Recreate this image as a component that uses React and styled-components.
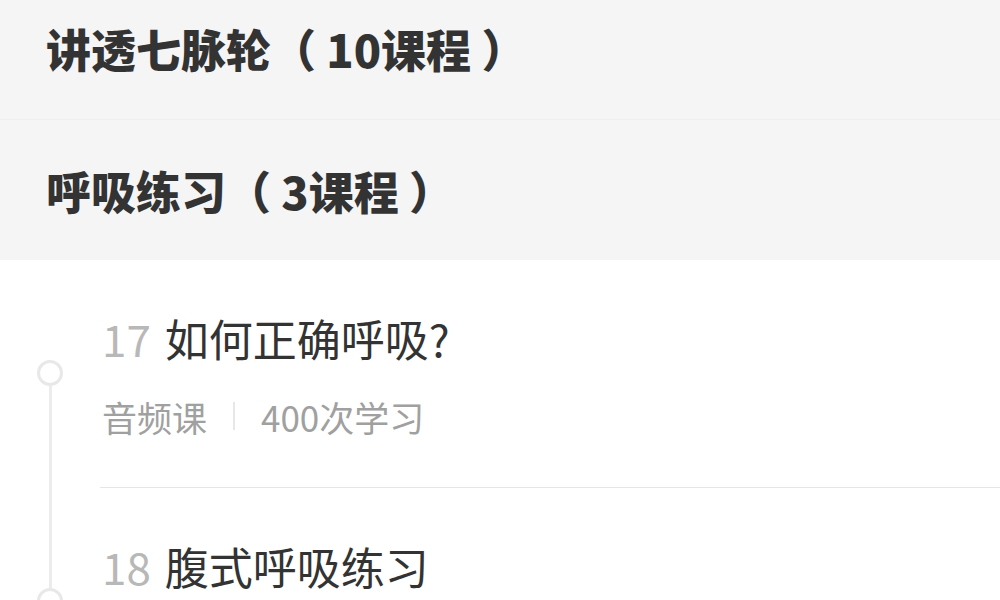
import styled, { createGlobalStyle } from 'styled-components';

const GlobalStyle = createGlobalStyle`
  html, body {
    margin: 0;
    padding: 0;
    background: #ffffff;
  }
  body {
    font-family: "Noto Sans CJK SC", "Noto Sans", sans-serif;
    overflow: hidden;
  }
`;

const Page = styled.div`
  width: 1000px;
  height: 600px;
  overflow: hidden;
`;

const Groups = styled.div`
  margin-top: -22px;
  background: #f5f5f5;
`;

const GroupHeader = styled.h2`
  margin: 0;
  height: ${({ $first }) => ($first ? '142px' : '140px')};
  display: flex;
  align-items: center;
  padding-left: 46px;
  font-size: 45px;
  font-weight: 900;
  color: #333333;
  white-space: pre;
  border-bottom: ${({ $divider }) => ($divider ? '1px solid #eeeeee' : 'none')};
  box-sizing: border-box;
`;

const Lessons = styled.ul`
  margin: 0;
  padding: 0;
  list-style: none;
  background: #ffffff;
`;

const Lesson = styled.li`
  display: flex;
`;

const Rail = styled.div`
  width: 100px;
  flex: none;
  display: flex;
  flex-direction: column;
  align-items: center;
`;

const RailLine = styled.span`
  width: 3px;
  background: ${({ $hidden }) => ($hidden ? 'transparent' : '#ececec')};
  height: ${({ $fill }) => ($fill ? 'auto' : '100px')};
  flex: ${({ $fill }) => ($fill ? 1 : 'none')};
`;

const Dot = styled.span`
  width: 26px;
  height: 26px;
  box-sizing: border-box;
  border: 3px solid #e8e8e8;
  border-radius: 50%;
  flex: none;
`;

const Body = styled.div`
  flex: 1;
  padding: 48px 0 49px 2px;
  border-bottom: 1px solid #e6e6e6;
`;

const Title = styled.div`
  display: flex;
  align-items: center;
  height: 60px;
  font-size: 44px;
  color: #333333;
  white-space: nowrap;
`;

const Num = styled.span`
  color: #b8b8b8;
  margin-right: 14px;
`;

const Meta = styled.div`
  margin-top: 26px;
  height: 44px;
  display: flex;
  align-items: center;
  font-size: 35px;
  color: #a0a0a0;
  gap: 26px;
`;

const Sep = styled.span`
  width: 2px;
  height: 28px;
  background: #e8e8e8;
`;

const groups = [
  { title: '讲透七脉轮（ 10课程 ）', divider: true },
  { title: '呼吸练习（ 3课程 ）', divider: false },
];

const lessons = [
  { num: 17, title: '如何正确呼吸?', type: '音频课', count: '400次学习' },
  { num: 18, title: '腹式呼吸练习', type: '音频课', count: '320次学习' },
];

function App() {
  return (
    <Page>
      <GlobalStyle />
      <Groups>
        {groups.map((g, i) => (
          <GroupHeader key={g.title} $divider={g.divider} $first={i === 0}>
            {g.title}
          </GroupHeader>
        ))}
      </Groups>
      <Lessons>
        {lessons.map((l, i) => (
          <Lesson key={l.num}>
            <Rail>
              <RailLine $hidden={i === 0} />
              <Dot />
              <RailLine $fill />
            </Rail>
            <Body>
              <Title>
                <Num>{l.num}</Num>
                {l.title}
              </Title>
              <Meta>
                <span>{l.type}</span>
                <Sep />
                <span>{l.count}</span>
              </Meta>
            </Body>
          </Lesson>
        ))}
      </Lessons>
    </Page>
  );
}

export default App;
